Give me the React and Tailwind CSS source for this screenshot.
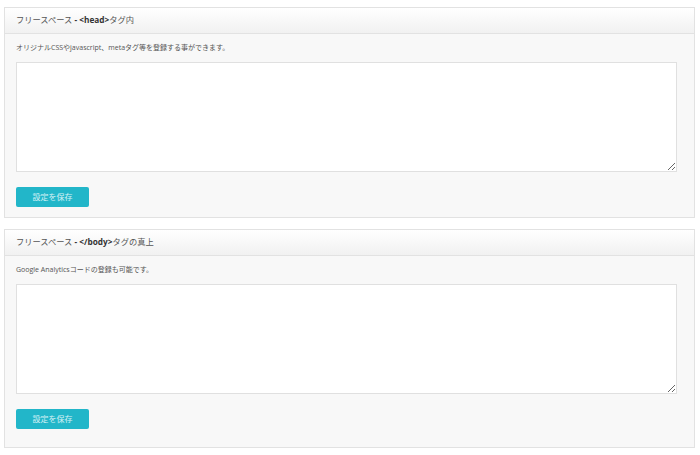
export default function App() {
  const panels = [
    {
      title: (
        <>
          フリースペース <b className="font-bold text-[#333]">- &lt;head&gt;</b>タグ内
        </>
      ),
      desc: 'オリジナルCSSやjavascript、metaタグ等を登録する事ができます。',
      pad: 'pb-[10px]',
    },
    {
      title: (
        <>
          フリースペース <b className="font-bold text-[#333]">- &lt;/body&gt;</b>タグの真上
        </>
      ),
      desc: 'Google Analyticsコードの登録も可能です。',
      pad: 'pb-[18px]',
    },
  ];

  return (
    <div
      className="flex h-[455px] w-[700px] flex-col gap-[11px] bg-white px-[4px] pt-[7px]"
      style={{ fontFamily: '"Open Sans", "Noto Sans CJK JP", sans-serif' }}
    >
      {panels.map((p, i) => (
        <section key={i} className="w-[691px] border border-[#e2e2e2] bg-[#f8f8f8]">
          {/* Panel heading */}
          <div className="flex h-[26px] items-center border-b border-[#e2e2e2] bg-gradient-to-b from-white to-[#f1f1f1] px-[11px] text-[8.25px] text-[#555]">
            <span>{p.title}</span>
          </div>

          {/* Body */}
          <div className={`px-[11px] pt-[8px] ${p.pad}`}>
            <p className="h-[12px] text-[7px] leading-[12px] text-[#555]">{p.desc}</p>
            <textarea className="mt-[8px] block h-[110px] w-[661px] resize-y border border-[#e0e0e0] bg-white outline-none" />
            <button className="mt-[15px] flex h-[20px] w-[73px] items-center justify-center rounded-[2px] bg-[#22b6c9] text-[8px] text-[#d4f1f5]">
              設定を保存
            </button>
          </div>
        </section>
      ))}
    </div>
  );
}
